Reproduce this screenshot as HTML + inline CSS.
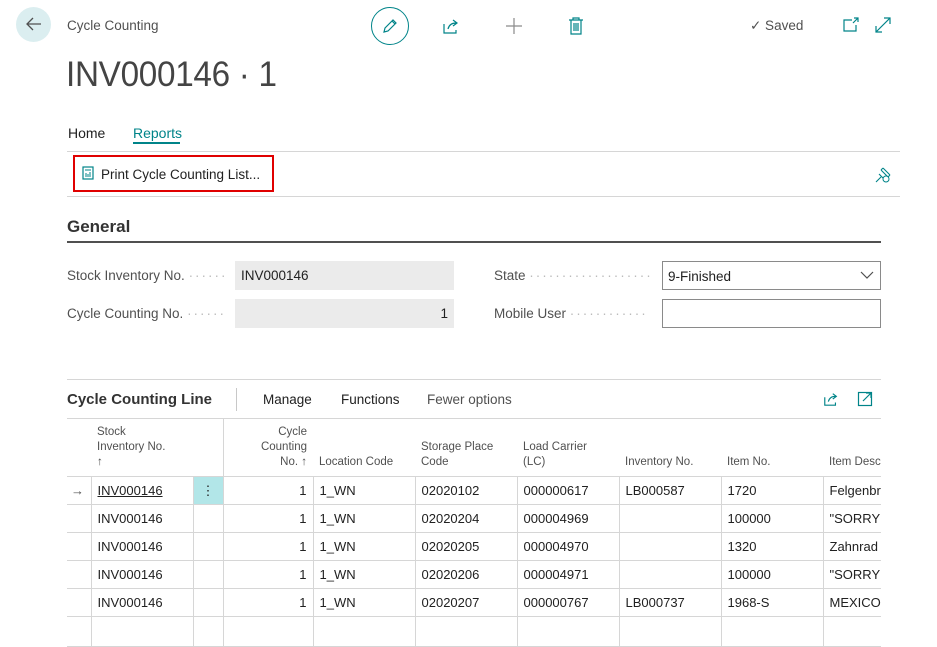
<!DOCTYPE html>
<html><head><meta charset="utf-8"><style>
*{box-sizing:border-box;margin:0;padding:0}
body{width:937px;height:640px;overflow:hidden;background:#fff;font-family:"Liberation Sans",sans-serif;color:#212121;position:relative;font-size:13px}
.a{position:absolute;white-space:nowrap}
.t{color:#008489}
.grid{position:absolute;left:67px;top:418px;width:814px;border-collapse:collapse;table-layout:fixed}
.grid td{border:1px solid #d6d6d6;height:28px;padding:0 6px;font-size:13px;vertical-align:middle;white-space:nowrap;overflow:hidden}
.grid tr.h td{height:58px;border-top:1px solid #d6d6d6;border-left:none;border-right:none;font-size:11.5px;color:#505050;vertical-align:bottom;padding-bottom:6px;line-height:15px;white-space:normal}
.grid td:first-child{border-left:none}
.grid td:last-child{border-right:none}
.r{text-align:right}
</style></head><body>
<div class="a" style="left:16px;top:7px;width:35px;height:35px;border-radius:50%;background:#dbeef0"></div>
<svg class="a" style="left:24px;top:14px" width="20" height="20" viewBox="0 0 20 20"><path d="M17 10H3M9 4L3 10l6 6" fill="none" stroke="#505050" stroke-width="1.3"/></svg>
<div class="a" style="left:67px;top:18px;font-size:13.5px;color:#505050">Cycle Counting</div>
<div class="a" style="left:371px;top:7px;width:38px;height:38px;border-radius:50%;border:1.3px solid #008489"></div>
<svg class="a" style="left:381px;top:17px" width="18" height="18" viewBox="0 0 18 18"><path d="M3 15l1-4 8-8 3 3-8 8zM11 4l3 3" fill="none" stroke="#008489" stroke-width="1.2"/></svg>
<svg class="a" style="left:442px;top:17px" width="18" height="18" viewBox="0 0 18 18"><path d="M2 7v9h12v-3M6 12c1-4 4-6 8-6M11 3l4 3-4 3" fill="none" stroke="#008489" stroke-width="1.2"/></svg>
<svg class="a" style="left:505px;top:17px" width="18" height="18" viewBox="0 0 18 18"><path d="M9 1v16M1 9h16" stroke="#8a8a8a" stroke-width="1.2"/></svg>
<svg class="a" style="left:567px;top:16px" width="18" height="20" viewBox="0 0 18 20"><path d="M2 4h14M6 4V2h6v2M4 4v14h10V4M7 7v8M9 7v8M11 7v8" fill="none" stroke="#008489" stroke-width="1.2"/></svg>
<div class="a" style="left:750px;top:18px;font-size:13.5px;color:#505050">✓ Saved</div>
<svg class="a" style="left:843px;top:17px" width="16" height="16" viewBox="0 0 16 16"><path d="M9 3H1v11h12V8M11 1h4v4M15 1l-5 5" fill="none" stroke="#008489" stroke-width="1.2"/></svg>
<svg class="a" style="left:874px;top:16px" width="18" height="18" viewBox="0 0 18 18"><path d="M2 16L16 2M10 2h6v6M2 10v6h6" fill="none" stroke="#008489" stroke-width="1.2"/></svg>
<div class="a" style="left:66px;top:55px;font-size:35px;color:#444;letter-spacing:-0.3px;transform:scaleX(0.95);transform-origin:left">INV000146 · 1</div>
<div class="a" style="left:68px;top:125px;font-size:14px">Home</div>
<div class="a t" style="left:133px;top:125px;font-size:14px">Reports</div>
<div class="a" style="left:133px;top:142px;width:47px;height:2px;background:#008489"></div>
<div class="a" style="left:67px;top:151px;width:833px;height:1px;background:#d6d6d6"></div>
<div class="a" style="left:67px;top:196px;width:833px;height:1px;background:#d6d6d6"></div>
<div class="a" style="left:73px;top:155px;width:201px;height:37px;border:2px solid #e00000"></div>
<svg class="a" style="left:82px;top:166px" width="12" height="14" viewBox="0 0 12 14"><rect x="1" y="1" width="10" height="12" fill="none" stroke="#008489" stroke-width="1.2"/><path d="M3 4h6M4 7v4M6 8v3M8 6v5" stroke="#008489"/></svg>
<div class="a" style="left:101px;top:167px;font-size:13.5px">Print Cycle Counting List...</div>
<svg class="a" style="left:874px;top:166px" width="18" height="18" viewBox="0 0 18 18"><path d="M2 16l5-5M5 8l5 5M7 4l7 7M9 2l7 7M7 4l2-2M14 11l2-2" fill="none" stroke="#008489" stroke-width="1.1"/><circle cx="12" cy="13" r="3" fill="#fff" stroke="#008489"/></svg>
<div class="a" style="left:67px;top:217px;font-size:17px;font-weight:bold;color:#333">General</div>
<div class="a" style="left:67px;top:241px;width:814px;height:2px;background:#505050"></div>
<div class="a" style="left:67px;top:268px;font-size:13.5px;color:#505050">Stock Inventory No. <span style="color:#bbb;letter-spacing:2px">······</span></div>
<div class="a" style="left:235px;top:261px;width:219px;height:29px;background:#ebebeb;padding:7px 6px;font-size:13.5px">INV000146</div>
<div class="a" style="left:67px;top:306px;font-size:13.5px;color:#505050">Cycle Counting No. <span style="color:#bbb;letter-spacing:2px">······</span></div>
<div class="a" style="left:235px;top:299px;width:219px;height:29px;background:#ebebeb;padding:7px 6px;font-size:13.5px;text-align:right">1</div>
<div class="a" style="left:494px;top:268px;font-size:13.5px;color:#505050">State <span style="color:#bbb;letter-spacing:2px">···················</span></div>
<div class="a" style="left:662px;top:261px;width:219px;height:29px;border:1px solid #8a8a8a;padding:7px 5px;font-size:13.5px">9-Finished</div>
<svg class="a" style="left:860px;top:270px" width="14" height="10" viewBox="0 0 14 10"><path d="M1 2l6 6 6-6" fill="none" stroke="#505050" stroke-width="1.2"/></svg>
<div class="a" style="left:494px;top:306px;font-size:13.5px;color:#505050">Mobile User <span style="color:#bbb;letter-spacing:2px">············</span></div>
<div class="a" style="left:662px;top:299px;width:219px;height:29px;border:1px solid #8a8a8a"></div>
<div class="a" style="left:67px;top:379px;width:814px;height:1px;background:#d6d6d6"></div>
<div class="a" style="left:67px;top:391px;font-size:15px;font-weight:bold;color:#333">Cycle Counting Line</div>
<div class="a" style="left:236px;top:388px;width:1px;height:23px;background:#c8c8c8"></div>
<div class="a" style="left:263px;top:392px;font-size:13.5px">Manage</div>
<div class="a" style="left:341px;top:392px;font-size:13.5px">Functions</div>
<div class="a" style="left:427px;top:392px;font-size:13.5px;color:#505050">Fewer options</div>
<svg class="a" style="left:823px;top:391px" width="16" height="16" viewBox="0 0 18 18"><path d="M2 7v9h12v-3M6 12c1-4 4-6 8-6M11 3l4 3-4 3" fill="none" stroke="#008489" stroke-width="1.3"/></svg>
<svg class="a" style="left:857px;top:391px" width="16" height="16" viewBox="0 0 16 16"><rect x="1.5" y="1.5" width="13" height="13" fill="none" stroke="#008489" stroke-width="1.2"/><path d="M6 10l8-8M9 2h5v5" fill="none" stroke="#008489" stroke-width="1.2"/></svg>
<table class="grid">
<colgroup><col style="width:24px"><col style="width:102px"><col style="width:30px"><col style="width:90px"><col style="width:102px"><col style="width:102px"><col style="width:102px"><col style="width:102px"><col style="width:102px"><col style="width:58px"></colgroup>
<tr class="h"><td></td><td style="border-right:none">Stock<br>Inventory No.<br>↑</td><td style="border-right:1px solid #d6d6d6"></td><td class="r">Cycle<br>Counting<br>No. ↑</td><td>Location Code</td><td>Storage Place<br>Code</td><td>Load Carrier<br>(LC)</td><td>Inventory No.</td><td>Item No.</td><td style="white-space:nowrap">Item Desc</td></tr>
<tr><td style="padding:0 4px;color:#505050">→</td><td><u>INV000146</u></td><td style="background:#b2e6e8;text-align:center;padding:0">⋮</td><td class="r">1</td><td>1_WN</td><td>02020102</td><td>000000617</td><td>LB000587</td><td>1720</td><td>Felgenbr</td></tr>
<tr><td></td><td>INV000146</td><td></td><td class="r">1</td><td>1_WN</td><td>02020204</td><td>000004969</td><td></td><td>100000</td><td>"SORRY!</td></tr>
<tr><td></td><td>INV000146</td><td></td><td class="r">1</td><td>1_WN</td><td>02020205</td><td>000004970</td><td></td><td>1320</td><td>Zahnrad</td></tr>
<tr><td></td><td>INV000146</td><td></td><td class="r">1</td><td>1_WN</td><td>02020206</td><td>000004971</td><td></td><td>100000</td><td>"SORRY!</td></tr>
<tr><td></td><td>INV000146</td><td></td><td class="r">1</td><td>1_WN</td><td>02020207</td><td>000000767</td><td>LB000737</td><td>1968-S</td><td>MEXICO</td></tr>
<tr><td style="height:30px"></td><td></td><td></td><td></td><td></td><td></td><td></td><td></td><td></td><td></td></tr>
</table>
</body></html>
